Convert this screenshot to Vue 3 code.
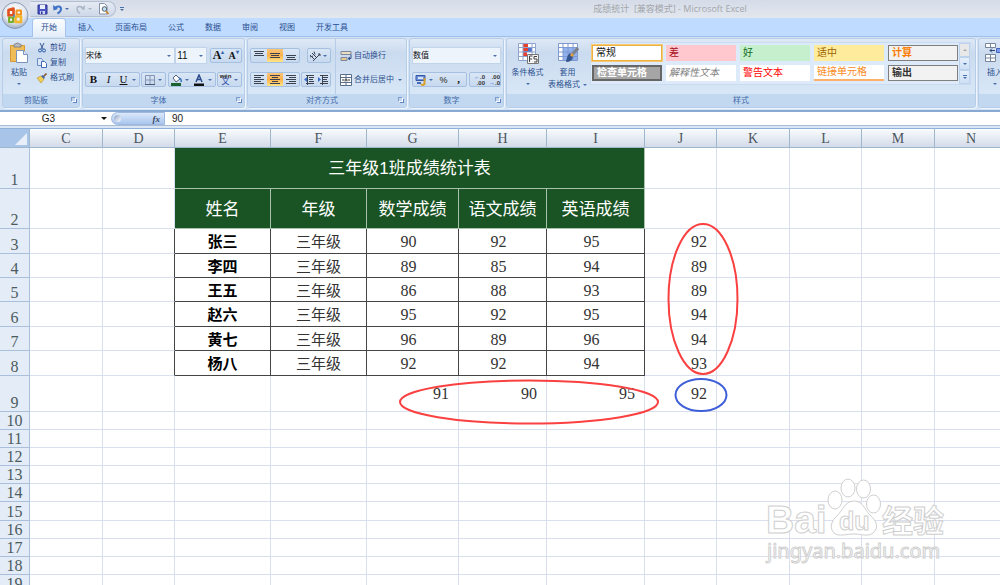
<script setup>
const tabs = ['开始', '插入', '页面布局', '公式', '数据', '审阅', '视图', '开发工具']
const styles = [
  { t: '常规', c: 'normal' }, { t: '差', c: 'bad' }, { t: '好', c: 'good' }, { t: '适中', c: 'neutral' }, { t: '计算', c: 'calc' },
  { t: '检查单元格', c: 'check' }, { t: '解释性文本', c: 'explain' }, { t: '警告文本', c: 'warn' }, { t: '链接单元格', c: 'linked' }, { t: '输出', c: 'output' },
]
const columns = ['C', 'D', 'E', 'F', 'G', 'H', 'I', 'J', 'K', 'L', 'M', 'N']
const heads = ['姓名', '年级', '数学成绩', '语文成绩', '英语成绩']
const students = [
  { row: 3, name: '张三', s: [90, 92, 95], avg: 92 },
  { row: 4, name: '李四', s: [89, 85, 94], avg: 89 },
  { row: 5, name: '王五', s: [86, 88, 93], avg: 89 },
  { row: 6, name: '赵六', s: [95, 92, 95], avg: 94 },
  { row: 7, name: '黄七', s: [96, 89, 96], avg: 94 },
  { row: 8, name: '杨八', s: [92, 92, 94], avg: 93 },
]
const averages = [91, 90, 95, 92]
const emptyRows = [10, 11, 12, 13, 14, 15, 16, 17, 18, 19]
const vAligns = [
  { n: '顶端对齐', d: 'M1 2.5h10M2 4.5h8M1 6.5h10' },
  { n: '垂直居中', d: 'M1 4.5h10M2 6.5h8M1 8.5h10', on: true },
  { n: '底端对齐', d: 'M1 6.5h10M2 8.5h8M1 10.5h10' },
]
const hAligns = [
  { n: '左对齐', d: 'M1 2.5h10M1 4.5h7M1 6.5h10M1 8.5h7M1 10.5h10' },
  { n: '居中', d: 'M1 2.5h10M3 4.5h6M1 6.5h10M3 8.5h6M1 10.5h10', on: true },
  { n: '右对齐', d: 'M1 2.5h10M4 4.5h7M1 6.5h10M4 8.5h7M1 10.5h10' },
]
</script>

<template>
  <div class="app">
    <header class="titlebar">
      <button class="office" aria-label="Office 按钮">
        <svg viewBox="0 0 30 30" width="30" height="30">
          <defs>
            <radialGradient id="orb" cx="50%" cy="35%" r="65%">
              <stop offset="0" stop-color="#fff" /><stop offset=".65" stop-color="#e3e7ee" /><stop offset="1" stop-color="#9dabc3" />
            </radialGradient>
          </defs>
          <circle cx="15" cy="14.500" r="13" fill="url(#orb)" stroke="#8a9bb8" />
          <g fill="none" stroke-linejoin="round">
            <path d="M8.500 9l5-1.500v6.500l-5 .5z" stroke="#e2501c" stroke-width="2.600" />
            <path d="M16.500 9.500h4.500v4h-4.500z" stroke="#f0941e" stroke-width="2" />
            <path d="M9 16.500h4v4.500h-4z" stroke="#7aaf2c" stroke-width="2" />
            <path d="M15.500 15.500h5.500v5.500h-5.500z" stroke="#f3b52a" stroke-width="2.600" />
            <path d="M14 13.500v3" stroke="#3d8ccc" stroke-width="1.500" />
          </g>
        </svg>
      </button>
      <div class="quick">
        <button aria-label="保存"><svg viewBox="0 0 11 11" width="11" height="11"><path d="M1 1h9v9H1z" fill="#4b55c4" stroke="#2c3690" /><path d="M3 1h5v4H3z" fill="#e8eefc" /><path d="M3 7h5v3H3z" fill="#c9d3f0" /><path d="M4 7.500h1.500V10H4z" fill="#2c3690" /></svg></button>
        <button aria-label="撤消"><svg viewBox="0 0 11 11" width="11" height="11"><path d="M2.500 4.500C5 1.500 9 2 9 5c0 2-1.500 3.500-3.500 4.500" fill="none" stroke="#3f72c8" stroke-width="2" /><path d="M1 1l.5 5.500L6 5z" fill="#3f72c8" /></svg></button>
        <i class="caret"></i>
        <button aria-label="恢复" class="after"><svg viewBox="0 0 11 11" width="11" height="11"><path d="M8 4.500C6 1.500 2 2 2 5c0 2 1.500 3.500 3 4.500" fill="none" stroke="#a9b4c6" stroke-width="1.500" /><path d="M10 1L9.500 6 6 5z" fill="#a9b4c6" /></svg></button>
        <i class="caret pale"></i>
        <button aria-label="打印预览" class="after"><svg viewBox="0 0 12 12" width="12" height="12"><path d="M1.500.5h5l2.500 2.500v8H1.500z" fill="#fff" stroke="#8492ab" /><circle cx="6.500" cy="6" r="2.300" fill="#bfe0f5" stroke="#59616f" /><path d="M8 8l2.500 3" stroke="#c8842c" stroke-width="1.800" /></svg></button>
      </div>
      <span class="more"><i class="bar"></i><i class="caret"></i></span>
      <h1>成绩统计&nbsp; [兼容模式] - Microsoft Excel</h1>
    </header>

    <nav class="tabs">
      <button v-for="(t, i) in tabs" :key="t" :class="{ active: i === 0 }">{{ t }}</button>
    </nav>

    <section class="ribbon">
      <div class="group g-clip">
        <div class="body">
          <button class="big">
            <svg viewBox="0 0 20 22" width="20" height="22"><path d="M1.500 3.500h14v16h-14z" fill="#f0bc58" stroke="#d69a34" /><path d="M5 2.500q3.500-3 7 0v2.500H5z" fill="#b8bdc2" stroke="#70767e" stroke-width=".8" /><path d="M7.500 8.500h7l4 4v8h-11z" fill="#fff" stroke="#7a93bc" /><path d="M14.500 8.500v4h4" fill="#dce6f6" stroke="#7a93bc" /></svg>
            <span>粘贴</span><i class="caret"></i>
          </button>
          <div class="list">
            <button><svg viewBox="0 0 10 10" width="10" height="10"><path d="M3 0l3 6M7 0L4 6" stroke="#36598f" /><circle cx="3" cy="7.500" r="1.500" fill="none" stroke="#2b59a8" /><circle cx="7" cy="7.500" r="1.500" fill="none" stroke="#2b59a8" /></svg>剪切</button>
            <button><svg viewBox="0 0 10 10" width="10" height="10"><path d="M.5.5h4l1.500 2v5h-5.500z" fill="#dce8fa" stroke="#6a8cc4" /><path d="M4.500 3.500h3l2 2v4h-5z" fill="#fff" stroke="#3f6ab8" /></svg>复制</button>
            <button><svg viewBox="0 0 10 10" width="10" height="10"><path d="M0 5l4-2 3 3-3 4z" fill="#f2cf58" stroke="#c09a30" stroke-width=".7" /><path d="M4 3l2-1 2 2-1 2z" fill="#4a65a8" /><path d="M7 3l2.500-2.500" stroke="#8b5a2c" stroke-width="1.600" /></svg>格式刷</button>
          </div>
        </div>
        <footer>剪贴板<b class="launch"></b></footer>
      </div>

      <div class="group g-font">
        <div class="body rows">
          <div class="line">
            <span class="combo wide"><select aria-label="字体"><option>宋体</option></select></span>
            <span class="combo size"><select aria-label="字号"><option>11</option></select></span>
            <div class="set push">
              <button class="serif grow" aria-label="增大字号">A<sup>▴</sup></button>
              <button class="serif shrink" aria-label="减小字号">A<sup>▾</sup></button>
            </div>
          </div>
          <div class="line spread">
            <div class="set">
              <button class="serif"><b>B</b></button><button class="serif"><em>I</em></button><button class="serif"><u>U</u></button><i class="caret"></i>
            </div>
            <div class="set"><button aria-label="边框"><svg viewBox="0 0 12 12" width="12" height="12"><path d="M1.500 1.500h9v9h-9zM6 1.500v9M1.500 6h9" fill="none" stroke="#8495b4" /><path d="M1 10.500h10" stroke="#4b5871" /></svg></button><i class="caret"></i></div>
            <div class="set">
              <button aria-label="填充颜色"><svg viewBox="0 0 12 12" width="12" height="12"><path d="M3 4l3-3 4 4-4 3z" fill="#fff" stroke="#51607c" /><path d="M9 4q3 1 2 4" fill="none" stroke="#3272c0" stroke-width="1.500" /><path d="M1 9h10v3H1z" fill="#1a6330" /></svg></button><i class="caret"></i>
              <button aria-label="字体颜色"><svg viewBox="0 0 12 12" width="12" height="12"><path d="M3 8l3-7 3 7M4 5.500h4" fill="none" stroke="#2b4a8b" stroke-width="1.500" /><path d="M1 9.500h10V12H1z" fill="#111" /></svg></button><i class="caret"></i>
            </div>
            <div class="set"><button class="wen" aria-label="拼音指南"><small>wén</small>文</button><i class="caret"></i></div>
          </div>
        </div>
        <footer>字体<b class="launch"></b></footer>
      </div>

      <div class="group g-align">
        <div class="body">
          <div class="rows cols">
            <div class="line">
              <div class="set"><button v-for="a in vAligns" :key="a.n" :aria-label="a.n" :class="{ on: a.on }"><svg viewBox="0 0 12 13" width="12" height="13"><path :d="a.d" stroke="#3c4350" /></svg></button></div>
              <div class="set"><button aria-label="方向"><svg viewBox="0 0 12 12" width="12" height="12"><path d="M1 5l4 4M3 3l4 4M5 1.500l1 3M1 7l3-1M4 11L11 4M9 4h2v2" fill="none" stroke="#3a4252" /></svg></button><i class="caret"></i></div>
            </div>
            <div class="line">
              <div class="set"><button v-for="a in hAligns" :key="a.n" :aria-label="a.n" :class="{ on: a.on }"><svg viewBox="0 0 12 13" width="12" height="13"><path :d="a.d" stroke="#3c4350" /></svg></button></div>
              <div class="set">
                <button aria-label="减少缩进量"><svg viewBox="0 0 12 12" width="12" height="12"><path d="M3 1.500h8M6 3.500h5M6 5.500h4M6 7.500h5M3 9.500h8M4.500 1v10" stroke="#3c4350" /><path d="M4 3v5L1 5.500z" fill="#3a6fd0" /></svg></button>
                <button aria-label="增加缩进量"><svg viewBox="0 0 12 12" width="12" height="12"><path d="M3 1.500h8M6 3.500h5M6 5.500h4M6 7.500h5M3 9.500h8M5.500 1v10" stroke="#3c4350" /><path d="M1 3v5l3-2.500z" fill="#3a6fd0" /></svg></button>
              </div>
            </div>
          </div>
          <div class="rows wraps">
            <button><svg viewBox="0 0 12 12" width="12" height="12"><path d="M1 1.500h10v3H1z" fill="#ecdcc0" stroke="#7b879d" /><path d="M1 7.500h6v3H1z" fill="#ecc88a" stroke="#7b879d" /><path d="M11 4.500v4H8.500M10 7L8 8.500 10 10" fill="none" stroke="#35518c" /></svg>自动换行</button>
            <button><svg viewBox="0 0 12 12" width="12" height="12"><path d="M.5.5h11v11H.5zM.5 3.500h11M.5 8.500h11M6 .5v3M6 8.500v3" fill="#fff" stroke="#5c6d8c" /><path d="M2 6h2.500M7.500 6H10" stroke="#333" /><path d="M5 7.500L6 4.500l1 3" fill="none" stroke="#222" stroke-width=".8" /></svg>合并后居中<i class="caret"></i></button>
          </div>
        </div>
        <footer>对齐方式<b class="launch"></b></footer>
      </div>

      <div class="group g-num">
        <div class="body rows">
          <div class="line"><span class="combo full"><select aria-label="数字格式"><option>数值</option></select></span></div>
          <div class="line spread">
            <div class="set">
              <button aria-label="会计数字格式"><svg viewBox="0 0 12 12" width="12" height="12"><path d="M1 1.500h9v5H1z" fill="#6f93dc" stroke="#3457a4" /><path d="M3 3h5v2H3z" fill="#d8e4fa" /><path d="M2 9h4" stroke="#476dba" stroke-width="2" /><path d="M9.500 4v6q-2 2-3.500 0" fill="none" stroke="#d9a02c" stroke-width="2" /></svg></button><i class="caret"></i>
              <button class="sym">%</button><button class="serif"><b>,</b></button>
            </div>
            <div class="set">
              <button class="dec" aria-label="增加小数位数"><span><s>←</s>.0</span><span>.00</span></button>
              <button class="dec" aria-label="减少小数位数"><span>.00</span><span><s>→</s>.0</span></button>
            </div>
          </div>
        </div>
        <footer>数字<b class="launch"></b></footer>
      </div>

      <div class="group g-style">
        <div class="body">
          <button class="big">
            <svg viewBox="0 0 22 22" width="22" height="22"><path d="M1.500 1.500h17v17h-17z" fill="#fff" /><path d="M6 1h5v4H6zM6 10h4v4H6z" fill="#e8402c" /><path d="M6 5h9v5H6z" fill="#4d6fd0" /><path d="M6 6h5v3H6z" fill="#e8402c" /><path d="M1.500 1.500h17v17h-17zM1.500 5.500h17M1.500 10h17M1.500 14.500h17M6 1.500v17M15 1.500v17" fill="none" stroke="#8ea4cc" /><path d="M10.500 12.500h11v9h-11z" fill="#f4f4f4" stroke="#777" /><path d="M12.500 20v-6h3M12.500 17h2.500M20 14.500h-3V17h3v3h-3" fill="none" stroke="#444" /></svg>
            <span>条件格式</span><i class="caret"></i>
          </button>
          <button class="big">
            <svg viewBox="0 0 22 22" width="22" height="22"><path d="M1.500 1.500h19v17h-19z" fill="#fff" /><path d="M6 5h14v13H6z" fill="#91b2ee" /><path d="M1.500 1.500h19v17h-19zM1.500 5.500h19M1.500 10h19M1.500 14.500h19M6 1.500v17M11 1.500v17M16 1.500v17" fill="none" stroke="#7e9ad0" /><path d="M21 6l-7 8" stroke="#7d828c" stroke-width="3" /><path d="M15 13l-2-2q-3 2-4 9 6 0 7-5z" fill="#35558f" /><path d="M14 14l2-2" stroke="#e2a044" stroke-width="3" /></svg>
            <span>套用</span><span>表格格式<i class="caret"></i></span>
          </button>
          <div class="gallery">
            <div class="swatches"><button v-for="s in styles" :key="s.t" :class="s.c">{{ s.t }}</button></div>
            <div class="scroll">
              <button aria-label="向上" class="off"><i class="caret up"></i></button>
              <button aria-label="向下"><i class="caret"></i></button>
              <button aria-label="其他"><i class="bar"></i><i class="caret"></i></button>
            </div>
          </div>
        </div>
        <footer>样式</footer>
      </div>

      <div class="group g-cells">
        <div class="body">
          <button class="big">
            <svg viewBox="0 0 22 22" width="22" height="22"><path d="M1.500 1.500h10v4h-10zM6.500 1.500v4M1.500 12.500h10v7h-10zM1.500 16h10M6.500 12.500v7" fill="#fff" stroke="#77859c" /><path d="M12.500 6.500h9v4h-9z" fill="#7b9cf0" stroke="#4564b8" /><path d="M11 8.500H6M8 6.500L6 8.500l2 2" fill="none" stroke="#2c4474" /></svg>
            <span>插入</span><i class="caret"></i>
          </button>
        </div>
        <footer></footer>
      </div>
    </section>

    <div class="formula">
      <input class="name" aria-label="名称框" value="G3" /><i class="caret dark"></i>
      <div class="fx"><span class="knob"></span><button aria-label="插入函数"><em>f</em>x</button></div>
      <input class="value" aria-label="编辑栏" value="90" />
    </div>

    <main class="sheet">
      <table>
        <colgroup><col class="w-head" /><col v-for="c in columns" :key="c" :class="'w-' + c" /></colgroup>
        <thead>
          <tr><th class="corner"><svg viewBox="0 0 12 12" width="12" height="12"><path d="M12 0v12H0z" fill="#e9eff9" /></svg></th><th v-for="c in columns" :key="c" scope="col">{{ c }}</th></tr>
        </thead>
        <tbody>
          <tr class="r1"><th scope="row">1</th><td></td><td></td><td colspan="5" class="green">三年级1班成绩统计表</td><td v-for="n in 5" :key="n"></td></tr>
          <tr class="r2"><th scope="row">2</th><td></td><td></td><td v-for="h in heads" :key="h" class="green">{{ h }}</td><td v-for="n in 5" :key="n"></td></tr>
          <tr v-for="p in students" :key="p.row" :class="['data', 'r' + p.row]">
            <th scope="row">{{ p.row }}</th><td></td><td class="edge"></td>
            <td class="box person">{{ p.name }}</td><td class="box">三年级</td>
            <td v-for="(v, i) in p.s" :key="i" class="box score">{{ v }}</td>
            <td class="num">{{ p.avg }}</td><td v-for="n in 4" :key="n"></td>
          </tr>
          <tr class="r9"><th scope="row">9</th><td v-for="n in 4" :key="n"></td><td v-for="(a, i) in averages" :key="i" class="num">{{ a }}</td><td v-for="n in 4" :key="n"></td></tr>
          <tr v-for="r in emptyRows" :key="r" :class="'r' + r"><th scope="row">{{ r }}</th><td v-for="c in columns" :key="c"></td></tr>
        </tbody>
      </table>

      <svg class="marks" viewBox="0 0 760 310" width="760" height="310" fill="none" stroke-width="2">
        <ellipse cx="703" cy="171" rx="34.500" ry="75" stroke="#fa4040" />
        <ellipse cx="529" cy="274" rx="129" ry="21.500" stroke="#fa4040" />
        <ellipse cx="701" cy="267" rx="25.500" ry="16" stroke="#3f5fd8" />
      </svg>

      <svg class="watermark" viewBox="0 0 186 90" width="186" height="90" fill="#fff" stroke="#cfcfcf">
        <ellipse cx="71" cy="25" rx="7" ry="9" /><ellipse cx="84" cy="13" rx="7" ry="9" /><ellipse cx="99.500" cy="14" rx="7" ry="9" /><ellipse cx="109.500" cy="29" rx="7" ry="9" />
        <path d="M90 26c-9 0-11 9-17 15-7 6-7 13-3 17 5 4 12 1 20 1s14 3 19-1c6-5 4-12-3-18-6-6-7-14-16-14z" />
        <g class="latin"><text x="2" y="58" font-size="39">Bai</text><text x="75" y="55" font-size="25">du</text></g>
        <text class="han" x="118" y="57" font-size="31">经验</text>
        <text class="url" x="3" y="83" font-size="20">jingyan.baidu.com</text>
      </svg>
    </main>
  </div>
</template>

<style>
body { margin: 0; overflow: hidden; }
</style>

<style scoped>
.app { height: 100vh; display: flex; flex-direction: column; overflow: hidden; background: #fff; color: #2b4f8e; font: 8px/12px "Liberation Sans", "Noto Sans CJK SC", sans-serif; }
.app * { box-sizing: border-box; }
button { border: 0; padding: 0; margin: 0; background: none; color: inherit; font: inherit; display: flex; align-items: center; justify-content: center; white-space: nowrap; }
svg { display: block; flex: none; }
input, select { border: 0; margin: 0; padding: 0; font: inherit; outline: 0; appearance: none; background: none; }
.caret { flex: none; width: 0; height: 0; border: 2px solid transparent; border-top-color: #4a70ac; border-bottom: 0; }
.caret.pale { border-top-color: #a9b4c6; }
.caret.up { border: 2px solid transparent; border-top: 0; border-bottom-color: #a9a9a9; }
.caret.dark { border-width: 3px 3px 0; border-top-color: #111; margin-right: 6px; }
.bar { width: 4px; height: 1px; background: #4a70ac; }

.titlebar { position: relative; flex: none; height: 18px; display: flex; align-items: center; padding-left: 30px; background: linear-gradient(#d5dce8, #e3e7ee); }
.office { position: absolute; left: 0; top: 1px; z-index: 2; }
.quick { width: 86px; height: 16px; display: flex; align-items: center; gap: 4px; padding-left: 6px; border: 1px solid #b3bfd2; border-left-color: transparent; border-radius: 0 8px 8px 0; background: linear-gradient(#e6ebf3, #ced8e8); }
.quick .caret { margin-left: -2px; }
.quick .after { margin-left: 2px; }
.more { display: flex; flex-direction: column; gap: 1px; margin-left: 4px; }
h1 { flex: 1; margin: 0; padding-left: 216px; text-align: center; font: 9px/18px "Open Sans", "Noto Sans CJK SC", sans-serif; color: #a3a6ab; }

.tabs { flex: none; height: 19px; display: flex; gap: 5px; padding: 1px 0 0 33px; background: #bfdbff; border-bottom: 1px solid #9fbfe8; }
.tabs button { padding: 0 8px; font-size: 8px; color: #2a4f8f; }
.tabs .active { height: 18px; background: linear-gradient(#fbfdff, #e3edf9); border-radius: 3px 3px 0 0; box-shadow: 0 0 0 1px #a5c3ea; clip-path: inset(-1px -1px 0 -1px); }

.ribbon { flex: none; height: 75px; display: flex; gap: 2px; padding: 1px 2px 2px; background: #d3e2f5; border-bottom: 2px solid #87a9d2; overflow: hidden; }
.group { flex: none; display: flex; flex-direction: column; border: 1px solid #b6cde8; border-radius: 3px; background: linear-gradient(#dfe9f6, #cbdbef 20%, #dcebf9); box-shadow: 1px 1px 0 #eef5fd; overflow: hidden; }
.g-clip { width: 78px; } .g-font { width: 163px; } .g-align { width: 160px; } .g-num { width: 95px; } .g-style { width: 470px; } .g-cells { width: 90px; }
.group footer { position: relative; height: 13px; line-height: 13px; text-align: center; background: #c1d8f0; color: #4169a8; padding-right: 10px; }
.g-style footer { padding: 0; }
.launch { position: absolute; right: 3px; top: 3px; width: 5px; height: 5px; border: 1px solid #7d9cca; border-right-color: #fff; border-bottom-color: #fff; }
.launch::after { content: ""; position: absolute; left: 1px; top: 1px; width: 3px; height: 3px; border: 1px solid #6084bd; border-top: 0; border-left: 0; }
.body { flex: 1; display: flex; }
.big { flex-direction: column; justify-content: flex-start; padding-top: 3px; min-width: 32px; }
.big span { display: flex; align-items: center; gap: 3px; line-height: 12px; }
.big svg + span { margin-top: 3px; }
.big span + .caret { margin-top: 4px; }
.list { display: flex; flex-direction: column; padding: 1px 0 0 2px; }
.list button { height: 15px; gap: 3px; justify-content: flex-start; }
.rows { display: flex; flex-direction: column; gap: 7px; padding: 8px 2px 0; }
.line { display: flex; height: 17px; align-items: center; }
.spread { justify-content: space-between; }
.set { display: flex; align-items: center; height: 15px; border: 1px solid #a6c0e2; border-radius: 2px; background: linear-gradient(#d9e6f5, #c7d9ef); }
.set button { width: 15px; height: 13px; }
.set .caret { margin: 0 3px 0 1px; }
.push { margin-left: 3px; }
.combo { position: relative; height: 17px; background: #edf4fc; border: 1px solid #c2d4ea; }
.combo::after { content: ""; position: absolute; right: 3px; top: 7px; border: 2px solid transparent; border-top-color: #4a70ac; border-bottom: 0; }
.combo select { display: block; width: 100%; height: 15px; line-height: 15px; color: #111; }
.combo.size select { font-size: 10px; padding-left: 1px; }
.wide { width: 91px; } .size { width: 32px; } .full { width: 100%; }
.serif { font: 11px/13px "Liberation Serif", serif; color: #111; }
.serif.grow { font-size: 12px; font-weight: bold; } .serif.shrink { font-size: 10px; font-weight: bold; }
.serif sup { font-size: 6px; line-height: 6px; color: #3a66b0; align-self: flex-start; }
.wen { flex-direction: column; line-height: 6px; font-size: 8px; color: #243f9c; }
.wen small { font: bold 6px/5px "Liberation Sans", sans-serif; color: #222; }
.set button.on { background: linear-gradient(#f9c47a, #fdb24c 50%, #ffe68a); }
.cols { width: 86px; padding-right: 3px; }
.cols .line { justify-content: space-between; }
.cols .set button { width: 16px; } .cols .set + .set button { width: 14px; }
.wraps { border-left: 1px solid #b7cce6; padding: 8px 0 0 4px; margin-left: 1px; }
.wraps button { height: 17px; gap: 2px; justify-content: flex-start; }
.wraps .caret { margin-left: 2px; }
.sym { font-size: 9px; color: #222; }
.dec { flex-direction: column; font: bold 6px/6px "Liberation Sans", sans-serif; color: #333; align-items: flex-end; }
.dec s { color: #2c62d0; text-decoration: none; }
.g-style .big { width: 39px; margin-left: 1px; }
.gallery { display: flex; gap: 1px; height: 43px; margin: 3px 0 0 3px; background: #dceafa; border: 1px solid #cbdcf0; padding-left: 1px; }
.swatches { display: grid; grid-template-columns: repeat(5, 70px); grid-template-rows: 16px 16px; gap: 4px; padding-top: 2px; }
.swatches button { justify-content: flex-start; padding-left: 3px; font-size: 10px; line-height: 14px; background: #fff; }
.swatches .normal { color: #111; border: 1px solid #efb03f; box-shadow: 0 0 0 1px #f5ca76; }
.swatches .bad { background: #ffc7ce; color: #a8101c; }
.swatches .good { background: #c6efce; color: #116a1c; }
.swatches .neutral { background: #ffeb9c; color: #9c6500; }
.swatches .calc { background: #f2f2f2; color: #fa7d00; font-weight: bold; border: 1px solid #7f7f7f; }
.swatches .check { background: #a5a5a5; color: #fff; font-weight: bold; border: 2px solid #666; }
.swatches .explain { color: #7f7f7f; font-style: italic; }
.swatches .warn { color: #f00; }
.swatches .linked { color: #fa8a1c; border-bottom: 2px solid #fdb06a; }
.swatches .output { background: #f2f2f2; color: #333; font-weight: bold; border: 1px solid #7f7f7f; }
.scroll { display: flex; flex-direction: column; width: 11px; }
.scroll button { flex: 1; flex-direction: column; gap: 1px; border: 1px solid #bdd2ec; background: linear-gradient(#e4effb, #cfe0f5); }
.scroll .off { background: #e8e8e8; }

.formula { flex: none; height: 14px; display: flex; align-items: center; background: #fff; border-bottom: 1px solid #a9bcd8; font-size: 10px; }
.name { width: 97px; height: 12px; text-align: center; color: #222; margin-right: 4px; }
.formula .caret { margin-right: 4px; }
.fx { width: 54px; height: 13px; display: flex; align-items: center; justify-content: space-between; padding: 0 4px 0 2px; border-radius: 7px 0 0 7px; border: 1px solid #9fb9de; background: linear-gradient(#dbe8fa, #a9c5ee); }
.knob { width: 7px; height: 7px; border-radius: 4px; background: linear-gradient(135deg, #8ba3c9, #fff); }
.fx button { font: bold italic 9px/10px "Liberation Serif", serif; color: #3c4a66; }
.value { flex: 1; min-width: 0; height: 12px; padding-left: 7px; color: #222; }

.sheet { position: relative; flex: 1; min-height: 0; overflow: hidden; border-top: 2px solid #dbe6f4; }
table { width: 1008px; table-layout: fixed; border-collapse: separate; border-spacing: 0; color: #333; font: 15px/16px "Liberation Serif", "Noto Sans CJK SC", serif; }
.w-head { width: 30px; } .w-C, .w-K, .w-M, .w-N { width: 73px; } .w-D, .w-J, .w-L { width: 72px; }
.w-E, .w-F { width: 96px; } .w-G { width: 92px; } .w-H { width: 88px; } .w-I { width: 98px; }
th, td { padding: 0; text-align: center; font-weight: normal; border: 0 solid #d9dfee; border-width: 0 1px 1px 0; overflow: hidden; white-space: nowrap; }
thead th { height: 20px; padding-top: 1px; background: linear-gradient(#f9fcfd, #d3dbe9); border-color: #9eb6ce; border-top: 1px solid #8fb0d8; color: #4c5560; font-size: 14px; }
thead .corner { background: #a9c4e9; vertical-align: bottom; }
.corner svg { margin: 0 2px 2px auto; }
tbody th { background: #e4ecf7; border-color: #a9bfdc; color: #4c5c60; vertical-align: bottom; font-size: 16px; }
tr { height: 18px; }
.r1 { height: 41px; } .r2 { height: 40px; } .r9 { height: 36px; } .r15 { height: 19px; }
.data { height: 24px; } .r3, .r6, .r8 { height: 25px; }
.data td { padding-top: 2px; }
.green { padding-top: 2px; background: #1a5424; color: #fff; font-size: 17px; font-family: "Liberation Sans", "Noto Sans CJK SC", sans-serif; border-color: #a9c2ad; }
.edge { border-right-color: #444; }
.box { border-color: #444; }
.person { font-weight: bold; color: #000; }
.score { padding-right: 8px; font-size: 16px; }
.num { text-align: right; padding-right: 9px; font-size: 16px; }
.marks { position: absolute; left: 0; top: 0; pointer-events: none; }
.watermark { position: absolute; right: 50px; bottom: 20px; pointer-events: none; overflow: visible; }
.latin { font-family: "Liberation Sans", sans-serif; font-weight: bold; }
.han { font-family: "Noto Sans CJK SC", sans-serif; font-weight: bold; }
.url { font-family: "Noto Sans", sans-serif; }
</style>
